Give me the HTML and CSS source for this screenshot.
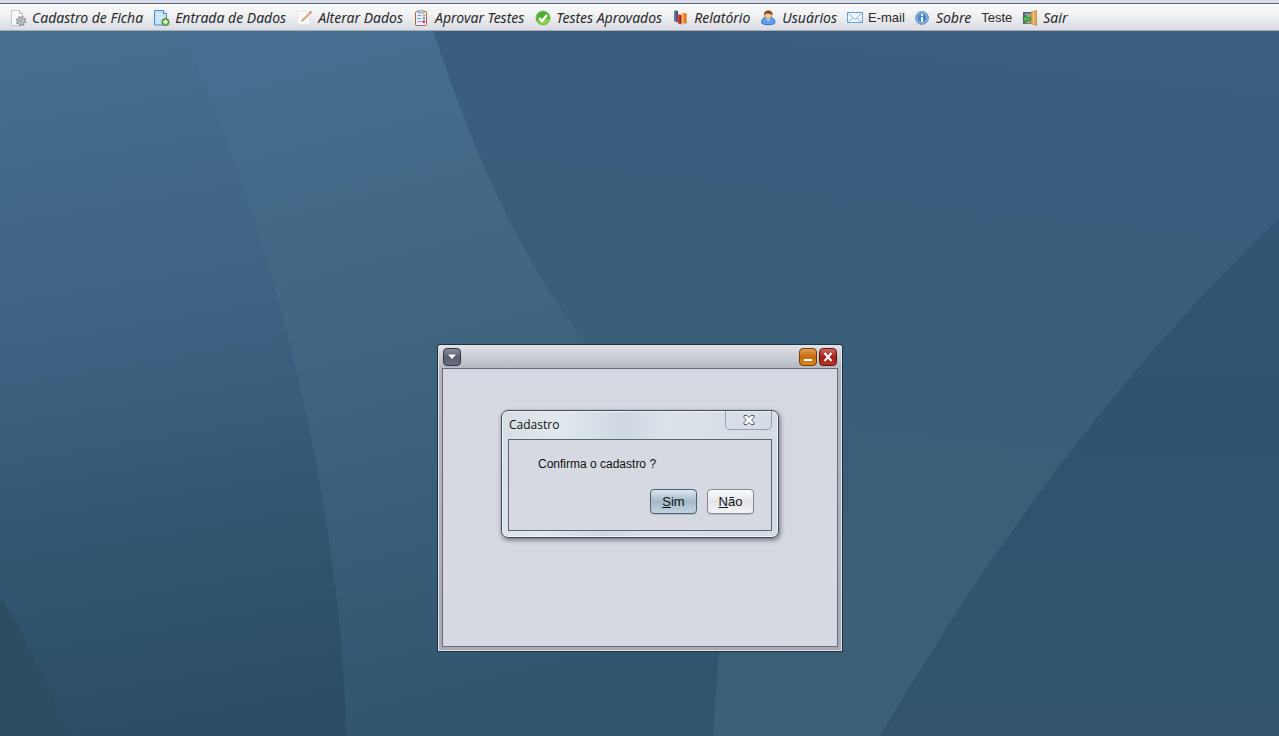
FILE: index.html
```
<!DOCTYPE html>
<html lang="pt-BR">
<head>
    <meta charset="UTF-8">
    <meta name="viewport" content="width=device-width, initial-scale=1.0">
    <title>Cadastro</title>
    <link rel="stylesheet" href="styles.css">
</head>
<body>
    <nav class="menubar">
        <button class="menu-item">
            <svg class="icon" viewBox="0 0 16 16">
                <path d="M.5 .5h8l3 3v12H.5z" fill="#f8f9fa" stroke="#c3c6ca"/>
                <path d="M8.500 .5v3h3" fill="#e4e6e8" stroke="#c3c6ca"/>
                <circle cx="10" cy="11" r="3.500" fill="#d3d5d8" stroke="#8b8f94"/>
                <circle cx="10" cy="11" r="4.500" fill="none" stroke="#8b8f94" stroke-width="1.500" stroke-dasharray="1.800 1.730"/>
                <circle cx="10" cy="11" r="1.300" fill="#fff" stroke="#7e8287"/>
            </svg>
            Cadastro de Ficha
        </button>
        <button class="menu-item">
            <svg class="icon" viewBox="0 0 16 16">
                <path d="M.5 .5h9l3 3v11.500h-12z" fill="#c4e0f8" stroke="#4a8fd0"/>
                <path d="M9.500 .5v3h3" fill="#fff" stroke="#4a8fd0"/>
                <path d="M2.500 4.500h5M2.500 7.500h8M2.500 10.500h5" stroke="#deeefb" stroke-width="1.500"/>
                <circle cx="11.500" cy="12" r="3.700" fill="#6fae3d" stroke="#477f26" stroke-width=".7"/>
                <path d="M11.500 9.800v4.400M9.300 12h4.400" stroke="#fff" stroke-width="1.500"/>
            </svg>
            Entrada de Dados
        </button>
        <button class="menu-item">
            <svg class="icon" viewBox="0 0 16 16">
                <path d="M.5 1.500h12v13h-12z" fill="#fafafb" stroke="#e6e7ea"/>
                <path d="M6 10l7.500-7.500" stroke="#dfa77e" stroke-width="2"/>
                <path d="M13 3l1.500-1.500" stroke="#c98a7c" stroke-width="2"/>
                <path d="M4.500 11.500l1-2 1 1z" fill="#5d5a58"/>
            </svg>
            Alterar Dados
        </button>
        <button class="menu-item">
            <svg class="icon" viewBox="0 0 16 16">
                <rect x="1.500" y="1.500" width="11" height="14" rx="1" fill="#eaf0fb" stroke="#a7683f"/>
                <path d="M4 .5h6v2.500H4z" fill="#c9cdd5" stroke="#7e8594" stroke-width=".6"/>
                <path d="M3.500 5.500h4M3.500 8.500h4M3.500 11.500h4" stroke="#7f9fe0" stroke-width="1.200"/>
                <path d="M9 4.500h2v2H9z" fill="#e2913b"/>
                <path d="M9 7.500h2v2H9z" fill="#51a5de"/>
                <path d="M8.500 10.500h2.500v2.500H8.500z" fill="#df2f64"/>
            </svg>
            Aprovar Testes
        </button>
        <button class="menu-item">
            <svg class="icon" viewBox="0 0 16 16">
                <circle cx="8" cy="8" r="7" fill="#50ad35" stroke="#72bf58" stroke-width=".8"/>
                <path d="M2 11a7 7 0 0 0 12.500-1C11 7 6 8 2 11z" fill="#8bd044"/>
                <path d="M4 8l3 3 5-6" fill="none" stroke="#fff" stroke-width="2.400"/>
            </svg>
            Testes Aprovados
        </button>
        <button class="menu-item">
            <svg class="icon" viewBox="0 0 16 16">
                <path d="M5 13.500l9-1 1 1-8 1.500z" fill="#c4c6ca"/>
                <path d="M1 1l2-.7L5 1v10.500L3 12 1 11z" fill="#5f7f9e"/>
                <path d="M3 1.500l2-.5v10.500L3 12z" fill="#3e566f"/>
                <path d="M4.500 5l2-.7 2 .7v8L6.500 14l-2-1z" fill="#d9493c"/>
                <path d="M6.500 5.500l2-.5v8l-2 1z" fill="#96231e"/>
                <path d="M8.500 3.500l2.500-1 2.500 1v9L11 13.500l-2.500-1z" fill="#f4a950"/>
                <path d="M11 4l2.500-.5v9L11 13.500z" fill="#dd7c26"/>
            </svg>
            Relatório
        </button>
        <button class="menu-item">
            <svg class="icon" viewBox="0 0 16 16">
                <path d="M.5 12.500c0-3.500 2.500-5 4-5h5c2 0 4.500 1.500 4.500 5 0 3-13.500 3-13.500 0z" fill="#5d9fe9" stroke="#2760ae" stroke-width=".8"/>
                <path d="M4.500 8l2.700 3L10 8z" fill="#d5e8fd"/>
                <circle cx="7.200" cy="5" r="3.700" fill="#f3c9a0" stroke="#9a5f35" stroke-width=".6"/>
                <path d="M3 5C3 1.500 5 .5 7.500 .5S12 2 11.500 5C10 3.500 8 4 6.500 3.500 5 3.500 4.500 4 3 5z" fill="#8a4a20"/>
            </svg>
            Usuários
        </button>
        <button class="menu-item plain">
            <svg class="icon" viewBox="0 0 16 16">
                <rect x=".5" y="2.500" width="15" height="10" fill="#eef6fd" stroke="#6ba0d6"/>
                <path d="M1.500 3.500L8 9.500l6.500-6M1.500 12l4.500-4.500M14.500 12L10 7.500" fill="none" stroke="#8fb9e1"/>
            </svg>
            E-mail
        </button>
        <button class="menu-item">
            <svg class="icon" viewBox="0 0 16 16">
                <circle cx="7" cy="8" r="6.500" fill="#6b9dd2" stroke="#7f9fc6"/>
                <circle cx="7" cy="8" r="5" fill="#4d86c5" stroke="#a9c9ea" stroke-width=".8"/>
                <path d="M7 4v2M7 7v5" stroke="#fff" stroke-width="1.800"/>
            </svg>
            Sobre
        </button>
        <button class="menu-item plain">Teste</button>
        <button class="menu-item">
            <svg class="icon" viewBox="0 0 16 16">
                <path d="M1 2h10v12H1z" fill="#59636e"/>
                <path d="M3 3.500h6v10H3z" fill="#98a99e"/>
                <path d="M9 2l5.500-1.500v15L9 13.500z" fill="#dda857" stroke="#a8742d" stroke-width=".6"/>
                <path d="M11.500 1.500v13" stroke="#f1cc85"/>
                <path d="M.5 9l4-4v2.500h4v3h-4V13z" fill="#57bb4b" stroke="#28752a" stroke-width=".7"/>
            </svg>
            Sair
        </button>
    </nav>

    <main class="desktop">
        <svg class="wallpaper" viewBox="0 0 1279 705" preserveAspectRatio="none">
            <defs>
                <linearGradient id="base" x1=".7" y1="0" x2=".5" y2="1">
                    <stop offset="0" stop-color="#3a5d80"/>
                    <stop offset=".4" stop-color="#395e7a"/>
                    <stop offset="1" stop-color="#3b6077"/>
                </linearGradient>
                <linearGradient id="left" gradientUnits="userSpaceOnUse" x1="100" y1="0" x2="220" y2="705">
                    <stop offset="0" stop-color="#476f90"/>
                    <stop offset=".4" stop-color="#3e6282"/>
                    <stop offset=".75" stop-color="#31556f"/>
                    <stop offset="1" stop-color="#2a4b63"/>
                </linearGradient>
                <linearGradient id="band" gradientUnits="userSpaceOnUse" x1="300" y1="0" x2="480" y2="705">
                    <stop offset="0" stop-color="#466f91"/>
                    <stop offset=".4" stop-color="#416681"/>
                    <stop offset=".65" stop-color="#3a5f7a"/>
                    <stop offset="1" stop-color="#31546e"/>
                </linearGradient>
                <linearGradient id="right" x1="0" y1="0" x2="0" y2="1">
                    <stop offset="0" stop-color="#325675"/>
                    <stop offset=".35" stop-color="#2f5271"/>
                    <stop offset="1" stop-color="#32556d"/>
                </linearGradient>
            </defs>
            <rect width="1279" height="705" fill="url(#base)"/>
            <path d="M180 0H433C470 110 510 210 580 305L730 520Q718 610 713 705H346C342 470 270 190 180 0z" fill="url(#band)"/>
            <path d="M0 0H180C270 190 342 470 346 705H0z" fill="url(#left)"/>
            <path d="M0 565Q40 630 67 705H0z" fill="#2d4c5f"/>
            <path d="M1279 187C1110 350 990 520 880 705H1279z" fill="url(#right)"/>
        </svg>

        <section class="frame">
            <header class="frame-title">
                <button class="frame-button menu" aria-label="Menu">
                    <svg viewBox="0 0 16 16"><path d="M4 5.500h8L8 10z" fill="#fff"/></svg>
                </button>
                <button class="frame-button minimize" aria-label="Minimizar">
                    <svg viewBox="0 0 16 16"><path d="M4 10h8v2H4z" fill="#fff"/></svg>
                </button>
                <button class="frame-button close" aria-label="Fechar">
                    <svg viewBox="0 0 16 16"><path d="M4.500 4l7 8M11.500 4l-7 8" stroke="#fff" stroke-width="2"/></svg>
                </button>
            </header>
            <div class="frame-body"></div>
        </section>

        <section class="dialog" role="dialog" aria-labelledby="dialog-title">
            <header class="dialog-header">
                <h1 class="dialog-title" id="dialog-title">Cadastro</h1>
                <button class="dialog-close" aria-label="Fechar">
                    <svg viewBox="0 0 14 12">
                        <path d="M2 1.500h3l2 2 2-2h3v2L9.500 6 12 8.500v2H9l-2-2-2 2H2v-2L4.500 6 2 3.500z" fill="#fff" stroke="#535b66" stroke-linejoin="round"/>
                    </svg>
                </button>
            </header>
            <div class="dialog-body">
                <p class="message">Confirma o cadastro ?</p>
                <div class="actions">
                    <button class="button primary"><u>S</u>im</button>
                    <button class="button"><u>N</u>ão</button>
                </div>
            </div>
        </section>
    </main>
</body>
</html>
```
FILE: styles.css
```
* {
    box-sizing: border-box;
}

body {
    margin: 0;
    min-height: 100vh;
    display: flex;
    flex-direction: column;
    font-family: "Liberation Sans", Arial, sans-serif;
    font-size: 12px;
    color: #111;
}

button {
    font: inherit;
    color: inherit;
    padding: 0;
    border: none;
    background: none;
}

/* menu */
.menubar {
    display: flex;
    align-items: center;
    gap: 11px;
    height: 31px;
    padding: 2px 11px 0;
    border-top: 3px solid #d9deea;
    border-bottom: 1px solid #a9adb5;
    background: linear-gradient(#5a6478 1px, #fbfbfc 1px, #f0f1f4 45%, #d9dbe1);
}

.menu-item {
    display: flex;
    align-items: center;
    gap: 5px;
    font-family: "Noto Sans", "Open Sans", sans-serif;
    font-size: 14px;
    font-style: italic;
    line-height: 20px;
    color: #2a2a2c;
    white-space: nowrap;
}

.menu-item.plain {
    margin: 0 -1px;
    font-family: "Liberation Sans", Arial, sans-serif;
    font-size: 13px;
    font-style: normal;
}

.icon {
    width: 16px;
    height: 16px;
    flex: none;
}

/* desktop */
.desktop {
    position: relative;
    flex: 1;
    overflow: hidden;
    background: #385e7a;
}

.wallpaper {
    position: absolute;
    width: 100%;
    height: 100%;
}

/* internal window */
.frame {
    position: absolute;
    left: 437px;
    top: 313px;
    width: 406px;
    height: 308px;
    display: flex;
    flex-direction: column;
    padding: 0 4px 4px;
    border: 1px solid #23303b;
    border-radius: 3px 3px 1px 1px;
    background: linear-gradient(#dfe2e7, #b3b7bf 24px, #a6abb4);
    box-shadow: inset 0 0 0 1px #dfe2e8;
}

.frame-title {
    display: flex;
    align-items: center;
    gap: 2px;
    height: 23px;
    padding: 0 1px;
}

.frame-button {
    width: 18px;
    height: 18px;
    border: 1px solid #333;
    border-radius: 4px;
}

.frame-button svg {
    display: block;
    width: 16px;
    height: 16px;
}

.frame-button.menu {
    margin-right: auto;
    border-color: #30343f;
    background: linear-gradient(#8b8f9d, #5a5f70 50%, #686d7d);
}

.frame-button.minimize {
    border-color: #713b0a;
    background: linear-gradient(#e19b50, #c66d0e 50%, #dd841c);
}

.frame-button.close {
    border-color: #5d1410;
    background: linear-gradient(#d06a62, #a41d18 50%, #b7352a);
}

.frame-body {
    flex: 1;
    border: 1px solid #666c78;
    background: #d6d9e1;
}

/* confirm dialog */
.dialog {
    position: absolute;
    left: 501px;
    top: 379px;
    width: 278px;
    padding: 0 6px 6px;
    border: 1px solid #424c57;
    border-radius: 7px;
    background: linear-gradient(100deg, #d6dde5, #e1e8ee 20%, #cfd8e1 42%, #dbe2e9 55%, #d5dbe4);
    box-shadow: inset 0 0 0 1px #eef2f6, 1px 2px 5px rgba(0, 0, 0, 0.5);
}

.dialog-header {
    display: flex;
    justify-content: space-between;
    height: 28px;
}

.dialog-title {
    margin: 0;
    padding-left: 1px;
    font-family: "Open Sans", "Noto Sans", sans-serif;
    font-size: 12px;
    font-weight: normal;
    line-height: 28px;
}

.dialog-close {
    display: flex;
    align-items: center;
    justify-content: center;
    width: 47px;
    height: 19px;
    border: 1px solid #98a1ac;
    border-top: none;
    border-radius: 0 0 5px 5px;
}

.dialog-close svg {
    width: 14px;
    height: 12px;
}

.dialog-body {
    padding: 16px 17px;
    border: 1px solid #596673;
    background: #d6d9e1;
}

.message {
    margin: 0 0 17px 12px;
    line-height: 16px;
}

.actions {
    display: flex;
    justify-content: flex-end;
    gap: 10px;
}

.button {
    width: 47px;
    height: 25px;
    border: 1px solid #83878e;
    border-radius: 4px;
    font-size: 13px;
    background: linear-gradient(#fcfcfd, #e3e5e9 50%, #f3f4f5);
    box-shadow: 0 1px 1px rgba(0, 0, 0, 0.15);
}

.button.primary {
    border-color: #4b5f73;
    background: linear-gradient(#dee8ef, #a3b9ca 50%, #c2d3df);
}
```
